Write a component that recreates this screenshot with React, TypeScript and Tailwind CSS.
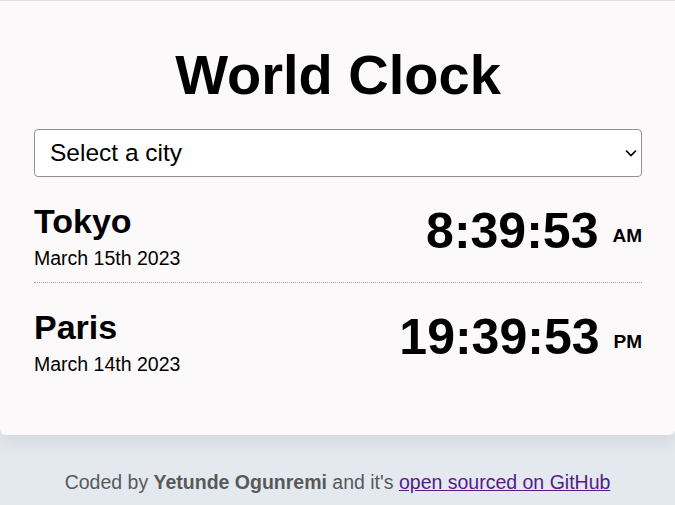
import React from 'react';

interface CityTime {
  name: string;
  date: string;
  time: string;
  period: string;
}

const cities: CityTime[] = [
  { name: 'Tokyo', date: 'March 15th 2023', time: '8:39:53', period: 'AM' },
  { name: 'Paris', date: 'March 14th 2023', time: '19:39:53', period: 'PM' }
];

const CityRow: React.FC<{ city: CityTime; last: boolean }> = ({ city, last }) => (
  <div
    className={`flex justify-between items-start pt-[27px] ${last ? 'pb-[13px]' : 'pb-[13px] border-b border-dotted border-[#a3a3a3]'
      }`}
  >
    <div className="flex flex-col">
      <h2 className="text-[34px] leading-none font-bold text-black">{city.name}</h2>
      <div className="text-[19.5px] leading-none mt-[11px] text-black">{city.date}</div>
    </div>
    <div className="flex items-start mt-[2px]">
      <span className="text-[50px] leading-none font-bold text-black">{city.time}</span>
      <small className="text-[19px] leading-none font-bold ml-[14px] mt-[20px] text-black">
        {city.period}
      </small>
    </div>
  </div>
);

export default function App() {
  return (
    <div className="min-h-screen border-t border-[#e2e2e2] bg-[#e4e9ef] font-['Liberation_Sans',Arial,sans-serif]">
      <div className="bg-[#fcf9fa] rounded-b-[6px] shadow-[0_8px_18px_rgba(0,0,0,0.07)] pl-[34px] pr-[33px] pt-[46px] pb-[48px]">
        <h1 className="text-[56px] leading-none font-bold text-center text-black mb-[26px]">World Clock</h1>

        <div className="h-[48px] flex items-center justify-between border border-[#909090] rounded-[4px] bg-white pl-[15px] pr-[4px]">
          <span className="text-[24.5px] leading-none text-black">Select a city</span>
          <svg width="12" height="8" viewBox="0 0 12 8" className="text-black">
            <polyline points="1,1.5 6,6.5 11,1.5" fill="none" stroke="currentColor" strokeWidth="1.7" />
          </svg>
        </div>

        {cities.map((city, i) => (
          <CityRow key={city.name} city={city} last={i === cities.length - 1} />
        ))}
      </div>

      <footer className="mt-[38px] text-center text-[19.5px] leading-none text-[#595959]">
        Coded by <strong className="font-bold">Yetunde Ogunremi</strong> and it's{' '}
        <a href="#" className="underline text-[#551a8b]">
          open sourced on GitHub
        </a>
      </footer>
    </div>
  );
}
